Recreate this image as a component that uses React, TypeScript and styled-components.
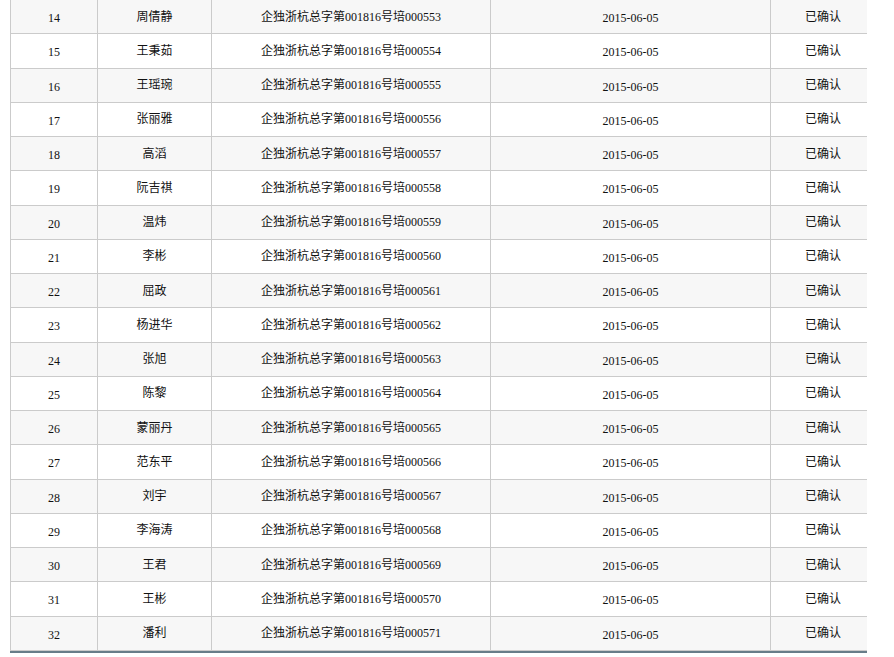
import React from 'react';
import styled, { createGlobalStyle } from 'styled-components';

const names = [
  '周倩静', '王秉茹', '王瑶琬', '张丽雅', '高滔', '阮吉祺', '温炜', '李彬', '屈政', '杨进华',
  '张旭', '陈黎', '蒙丽丹', '范东平', '刘宇', '李海涛', '王君', '王彬', '潘利',
];

const rows = names.map((name, i) => ({
  no: 14 + i,
  name,
  cert: `企独浙杭总字第001816号培000${553 + i}`,
  date: '2015-06-05',
  status: '已确认',
}));

// column widths, left border included in the first one
const colWidths = [88, 114, 279, 280, 96];

const App: React.FC = () => {
  return (
    <>
      <GlobalStyle />
      <Page>
        <Table>
          <colgroup>
            {colWidths.map((w, i) => (
              <Col key={i} $w={w} />
            ))}
          </colgroup>
          <tbody>
            {rows.map((r) => (
              <Row key={r.no} $striped={r.no % 2 === 0}>
                <NumCell>{r.no}</NumCell>
                <TextCell>{r.name}</TextCell>
                <TextCell>{r.cert}</TextCell>
                <NumCell>{r.date}</NumCell>
                <StatusCell>{r.status}</StatusCell>
              </Row>
            ))}
          </tbody>
        </Table>
      </Page>
    </>
  );
};

const GlobalStyle = createGlobalStyle`
  body {
    margin: 0;
    background: #fff;
    font-family: "Liberation Serif", "Noto Sans CJK SC", serif;
    font-size: 12px;
    color: #111;
  }
`;

const Page = styled.div`
  padding-left: 10px;
  overflow: hidden;
  height: 657px;
`;

const Table = styled.table`
  width: 857px;
  margin-top: -1px;
  border-collapse: separate;
  border-spacing: 0;
  table-layout: fixed;
  border-top: 1px solid #cbcbcb;
  border-bottom: 2px solid #687d89;
`;

const Col = styled.col<{ $w: number }>`
  width: ${(p) => p.$w}px;
`;

const Row = styled.tr<{ $striped: boolean }>`
  background: ${(p) => (p.$striped ? '#f7f7f7' : '#fff')};
`;

const Cell = styled.td`
  height: 34.25px;
  box-sizing: border-box;
  padding: 0;
  text-align: center;
  vertical-align: middle;
  border-bottom: 1px solid #cbcbcb;
  border-right: 1px solid #cbcbcb;
  line-height: 16px;
  &:first-child {
    border-left: 1px solid #cbcbcb;
  }
`;

const NumCell = styled(Cell)`
  padding-top: 3px;
`;

const TextCell = styled(Cell)``;

const StatusCell = styled(Cell)`
  border-right: none;
  padding-left: 8px;
`;

export default App;
